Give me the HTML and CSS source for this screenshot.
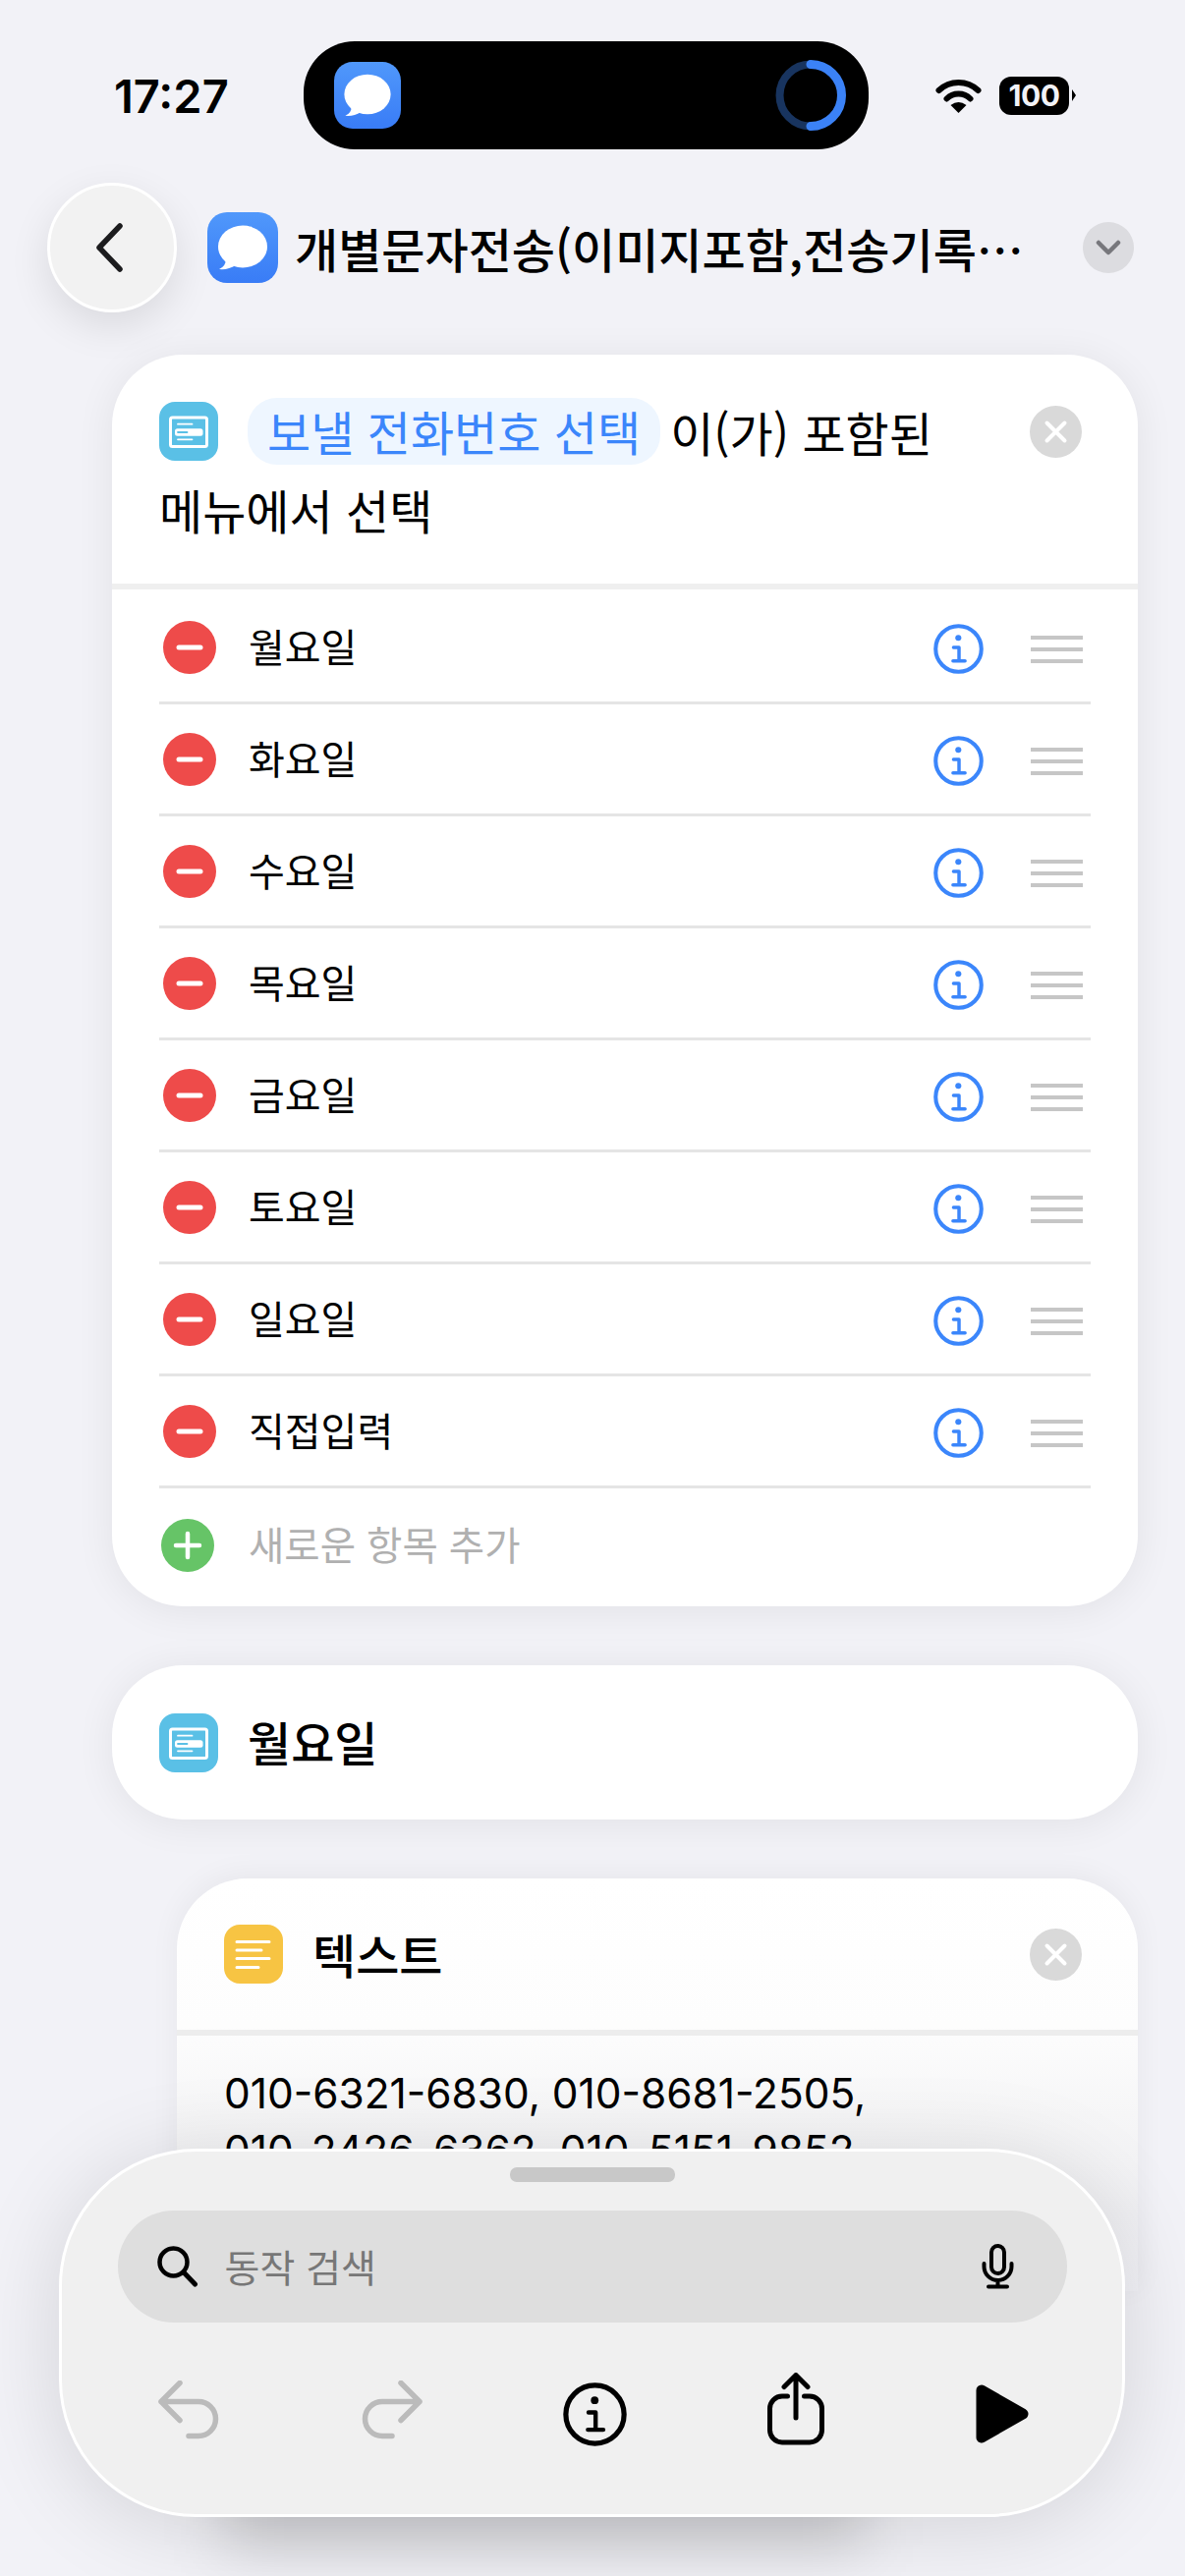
FILE: index.html
```html
<!DOCTYPE html>
<html lang="ko">
<head>
    <meta charset="UTF-8">
    <meta name="viewport" content="width=device-width, initial-scale=1.0">
    <title>개별문자전송</title>
    <link rel="stylesheet" href="styles.css">
</head>
<body>

<!-- shared icons -->
<svg class="defs" width="0" height="0">
    <defs>
        <linearGradient id="msgGrad" x1="0" y1="0" x2="0" y2="1">
            <stop offset="0" stop-color="#5098fb"/>
            <stop offset="1" stop-color="#397cf6"/>
        </linearGradient>
    </defs>
    <symbol id="msg" viewBox="0 0 72 72">
        <rect width="72" height="72" rx="20" fill="url(#msgGrad)"/>
        <ellipse cx="36" cy="35" rx="25" ry="21.5" fill="#fff"/>
        <path d="M19 47 Q19 55 12 58 Q21 59 29 54 Z" fill="#fff"/>
    </symbol>
    <symbol id="data" viewBox="0 0 60 60">
        <rect width="60" height="60" rx="16" fill="#5ac0e6"/>
        <rect x="11.5" y="16" width="37" height="29.5" rx="2" fill="none" stroke="#fff" stroke-width="3"/>
        <path d="M19 22.7 H33.5 M19 38.3 H33.5" stroke="#fff" stroke-width="1.8" stroke-linecap="round"/>
        <rect x="16" y="27.3" width="28.5" height="7.4" rx="2.5" fill="#fff"/>
        <path d="M19 31 H28.5" stroke="#5ac0e6" stroke-width="1.8" stroke-linecap="round"/>
    </symbol>
    <symbol id="note" viewBox="0 0 60 60">
        <rect width="60" height="60" rx="16" fill="#f7c443"/>
        <path d="M13 17.5 H46 M13 26 H38 M13 34.5 H46 M13 43.5 H35" stroke="#fff" stroke-width="3" stroke-linecap="round"/>
    </symbol>
    <symbol id="info" viewBox="0 0 50 50">
        <circle cx="25" cy="25" r="22.8" fill="none" stroke="currentColor" stroke-width="4"/>
        <circle cx="24.8" cy="14" r="3" fill="currentColor"/>
        <path d="M20 23.5 H25.5 V37 M19.5 37 H31.5" fill="none" stroke="currentColor" stroke-width="3.4" stroke-linecap="round" stroke-linejoin="round"/>
    </symbol>
    <symbol id="close" viewBox="0 0 53 53">
        <circle cx="26.5" cy="26.5" r="26.5" fill="#d9d9d9"/>
        <path d="M17.5 17.5 L35.5 35.5 M35.5 17.5 L17.5 35.5" stroke="#fff" stroke-width="4" stroke-linecap="round"/>
    </symbol>
    <symbol id="minus" viewBox="0 0 54 54">
        <circle cx="27" cy="27" r="27" fill="#ee4b4a"/>
        <path d="M16 27 H38" stroke="#fff" stroke-width="5" stroke-linecap="round"/>
    </symbol>
</svg>

<div class="status">
    <div class="time">17:27</div>
    <div class="island">
        <svg class="islandIcon" width="68" height="70"><use href="#msg"/></svg>
        <svg class="ring" width="72" height="72" viewBox="0 0 72 72">
            <circle cx="36" cy="36" r="31.5" fill="none" stroke="#18345f" stroke-width="8"/>
            <path d="M36 4.5 A31.5 31.5 0 0 1 36 67.5" fill="none" stroke="#3b82f6" stroke-width="9" stroke-linecap="round"/>
        </svg>
    </div>
    <svg class="wifi" width="47" height="36" viewBox="0 0 47 36">
        <path d="M3.5 13 A29 29 0 0 1 43.5 13 M11.5 21.5 A17 17 0 0 1 35.5 21.5" fill="none" stroke="#000" stroke-width="6" stroke-linecap="round"/>
        <path d="M15.5 28 Q23.5 22 31.5 28 L23.5 36 Z" fill="#000"/>
    </svg>
    <div class="battery">100</div>
    <div class="batteryNub"></div>
</div>

<div class="topbar">
    <div class="back">
        <svg width="30" height="52" viewBox="0 0 30 52"><path d="M26 4 L5 26 L26 48" fill="none" stroke="#1c1c1e" stroke-width="5.5" stroke-linecap="round" stroke-linejoin="round"/></svg>
    </div>
    <svg class="titleIcon" width="72" height="72"><use href="#msg"/></svg>
    <div class="title">개별문자전송(이미지포함,전송기록…</div>
    <div class="chevron">
        <svg width="26" height="16" viewBox="0 0 26 16"><path d="M3 3 L13 13 L23 3" fill="none" stroke="#77777c" stroke-width="4.5" stroke-linecap="round" stroke-linejoin="round"/></svg>
    </div>
</div>

<div class="content">
    <div class="card menuCard">
        <div class="menuHead">
            <div class="menuLine">
                <svg width="60" height="60"><use href="#data"/></svg>
                <span class="pill">보낼 전화번호 선택</span>
                <span class="menuText">이(가) 포함된</span>
                <svg class="closeBtn" width="53" height="53"><use href="#close"/></svg>
            </div>
            <div class="menuLine2">메뉴에서 선택</div>
        </div>
        <div class="list">
            <div class="row">
                <svg class="minus" width="54" height="54"><use href="#minus"/></svg>
                <span class="rowText">월요일</span>
                <svg class="rowInfo" width="51" height="51"><use href="#info"/></svg>
                <div class="handle"><i></i><i></i><i></i></div>
            </div>
            <div class="row">
                <svg class="minus" width="54" height="54"><use href="#minus"/></svg>
                <span class="rowText">화요일</span>
                <svg class="rowInfo" width="51" height="51"><use href="#info"/></svg>
                <div class="handle"><i></i><i></i><i></i></div>
            </div>
            <div class="row">
                <svg class="minus" width="54" height="54"><use href="#minus"/></svg>
                <span class="rowText">수요일</span>
                <svg class="rowInfo" width="51" height="51"><use href="#info"/></svg>
                <div class="handle"><i></i><i></i><i></i></div>
            </div>
            <div class="row">
                <svg class="minus" width="54" height="54"><use href="#minus"/></svg>
                <span class="rowText">목요일</span>
                <svg class="rowInfo" width="51" height="51"><use href="#info"/></svg>
                <div class="handle"><i></i><i></i><i></i></div>
            </div>
            <div class="row">
                <svg class="minus" width="54" height="54"><use href="#minus"/></svg>
                <span class="rowText">금요일</span>
                <svg class="rowInfo" width="51" height="51"><use href="#info"/></svg>
                <div class="handle"><i></i><i></i><i></i></div>
            </div>
            <div class="row">
                <svg class="minus" width="54" height="54"><use href="#minus"/></svg>
                <span class="rowText">토요일</span>
                <svg class="rowInfo" width="51" height="51"><use href="#info"/></svg>
                <div class="handle"><i></i><i></i><i></i></div>
            </div>
            <div class="row">
                <svg class="minus" width="54" height="54"><use href="#minus"/></svg>
                <span class="rowText">일요일</span>
                <svg class="rowInfo" width="51" height="51"><use href="#info"/></svg>
                <div class="handle"><i></i><i></i><i></i></div>
            </div>
            <div class="row">
                <svg class="minus" width="54" height="54"><use href="#minus"/></svg>
                <span class="rowText">직접입력</span>
                <svg class="rowInfo" width="51" height="51"><use href="#info"/></svg>
                <div class="handle"><i></i><i></i><i></i></div>
            </div>
            <div class="addRow">
                <svg width="54" height="54" viewBox="0 0 54 54">
                    <circle cx="27" cy="27" r="27" fill="#66c467"/>
                    <path d="M27 15 V39 M15 27 H39" stroke="#fff" stroke-width="4.5" stroke-linecap="round"/>
                </svg>
                <span class="addText">새로운 항목 추가</span>
            </div>
        </div>
    </div>

    <div class="card caseCard">
        <svg width="60" height="60"><use href="#data"/></svg>
        <span class="caseText">월요일</span>
    </div>

    <div class="card textCard">
        <div class="textHead">
            <svg width="60" height="60"><use href="#note"/></svg>
            <span class="caseText">텍스트</span>
            <svg class="closeBtn" width="53" height="53"><use href="#close"/></svg>
        </div>
        <div class="numbers">010-6321-6830, 010-8681-2505,<br>010-2426-6362, 010-5151-9852</div>
    </div>
</div>

<!-- floating action sheet -->
<div class="sheet">
    <div class="grabber"></div>
    <div class="search">
        <svg width="42" height="42" viewBox="0 0 42 42">
            <circle cx="16.5" cy="16.5" r="14" fill="none" stroke="#000" stroke-width="4.5"/>
            <path d="M27 27 L38.5 39" stroke="#000" stroke-width="5" stroke-linecap="round"/>
        </svg>
        <span class="searchText">동작 검색</span>
        <svg class="mic" width="33" height="46" viewBox="0 0 33 46">
            <rect x="10" y="2" width="13" height="28" rx="6.5" fill="none" stroke="#000" stroke-width="4"/>
            <path d="M2.5 20 V23 A14 14 0 0 0 30.5 23 V20 M16.5 37 V43 M7 43.5 H26" fill="none" stroke="#000" stroke-width="4" stroke-linecap="round"/>
        </svg>
    </div>
    <div class="tools">
        <svg class="arrow" width="62" height="60" viewBox="0 0 62 60">
            <path d="M22 2.5 L3 21.5 L22 40.5 M3 21.5 H41 A17.5 17.5 0 0 1 41 56.5 H31" fill="none" stroke="#bbb" stroke-width="5.5" stroke-linecap="round" stroke-linejoin="round"/>
        </svg>
        <svg class="arrow" width="62" height="60" viewBox="0 0 62 60">
            <path d="M40 2.5 L59 21.5 L40 40.5 M59 21.5 H21 A17.5 17.5 0 0 0 21 56.5 H31" fill="none" stroke="#bbb" stroke-width="5.5" stroke-linecap="round" stroke-linejoin="round"/>
        </svg>
        <svg class="toolInfo" width="65" height="65"><use href="#info"/></svg>
        <svg class="share" width="58" height="74" viewBox="0 0 58 74">
            <path d="M20.5 24 H15 A12.5 12.5 0 0 0 2.5 36.5 V58.5 A12.5 12.5 0 0 0 15 71 H43 A12.5 12.5 0 0 0 55.5 58.5 V36.5 A12.5 12.5 0 0 0 43 24 H37.5" fill="none" stroke="#000" stroke-width="5" stroke-linecap="round"/>
            <path d="M29 46 V3 M17 14.5 L29 2.5 L41 14.5" fill="none" stroke="#000" stroke-width="5" stroke-linecap="round" stroke-linejoin="round"/>
        </svg>
        <svg width="54" height="60" viewBox="0 0 54 60">
            <polygon points="6,6 48,30 6,54" fill="#000" stroke="#000" stroke-width="11" stroke-linejoin="round"/>
        </svg>
    </div>
</div>

</body>
</html>
```

FILE: styles.css
```css
html, body {
    margin: 0;
    padding: 0;
}

body {
    position: relative;
    width: 1206px;
    height: 2622px;
    overflow: hidden;
    background: #f2f2f7;
    color: #000;
    font-family: "Noto Sans CJK KR", "Noto Sans", sans-serif;
}

svg {
    display: block;
    flex: none;
}

.defs {
    position: absolute;
}

/* status bar */
.status {
    display: flex;
    align-items: center;
    padding: 42px 0 0 116px;
}

.time {
    width: 193px;
    font-family: Inter, sans-serif;
    font-size: 47px;
    font-weight: 600;
}

.island {
    display: flex;
    align-items: center;
    justify-content: space-between;
    box-sizing: border-box;
    width: 575px;
    height: 110px;
    padding: 0 23px 0 31px;
    border-radius: 52px;
    background: #000;
}

.wifi {
    margin-left: 68px;
}

.battery {
    width: 71px;
    height: 39px;
    margin-left: 18px;
    border-radius: 12px;
    background: #000;
    color: #f2f2f7;
    font-family: Inter, sans-serif;
    font-size: 30px;
    font-weight: 700;
    line-height: 39px;
    text-align: center;
    letter-spacing: -0.5px;
}

.batteryNub {
    width: 0;
    height: 0;
    margin-left: 3px;
    border-top: 6px solid transparent;
    border-bottom: 6px solid transparent;
    border-left: 4px solid #000;
}

/* top bar */
.topbar {
    display: flex;
    align-items: center;
    height: 132px;
    margin-top: 34px;
    padding-left: 48px;
}

.back {
    display: flex;
    align-items: center;
    justify-content: center;
    box-sizing: border-box;
    width: 132px;
    height: 132px;
    padding-right: 6px;
    border: 3px solid #fff;
    border-radius: 50%;
    background: #f2f2f2;
    box-shadow: 0 14px 40px rgba(0, 0, 0, 0.1);
}

.titleIcon {
    margin-left: 31px;
}

.title {
    margin-left: 17px;
    font-size: 48px;
    font-weight: 500;
    white-space: nowrap;
}

.chevron {
    display: flex;
    align-items: center;
    justify-content: center;
    width: 52px;
    height: 52px;
    margin-left: auto;
    margin-right: 52px;
    border-radius: 50%;
    background: #dcdce0;
}

/* cards */
.content {
    margin-top: 43px;
    padding: 0 48px 0 114px;
}

.card {
    border-radius: 72px;
    background: #fff;
    box-shadow: 0 4px 40px rgba(0, 0, 0, 0.07);
}

.menuHead {
    box-sizing: border-box;
    height: 233px;
    padding: 44px 57px 0 48px;
}

.menuLine {
    display: flex;
    align-items: center;
    height: 68px;
}

.pill {
    height: 68px;
    margin-left: 30px;
    padding: 0 20px;
    border-radius: 30px;
    background: #eef6ff;
    color: #3b86fb;
    font-size: 48px;
    line-height: 66px;
    white-space: nowrap;
}

.menuText {
    margin-left: 10px;
    font-size: 48px;
    white-space: nowrap;
}

.closeBtn {
    margin-left: auto;
}

.menuLine2 {
    margin-top: 15px;
    font-size: 48px;
    line-height: 60px;
}

.list {
    padding: 3px 48px 0;
    border-top: 6px solid #efefef;
}

.row {
    display: flex;
    align-items: center;
    box-sizing: border-box;
    height: 114px;
    border-bottom: 3px solid #e5e5e5;
}

.minus {
    margin-left: 4px;
}

.rowText {
    margin-left: 33px;
    margin-bottom: 3px;
    font-size: 40px;
}

.rowInfo {
    margin-left: auto;
    margin-top: 3px;
    color: #3b86fb;
}

.handle {
    display: flex;
    flex-direction: column;
    gap: 8px;
    width: 53px;
    margin: 4px 8px 0 48px;
}

.handle i {
    display: block;
    height: 4px;
    background: #c6c6c6;
}

.addRow {
    display: flex;
    align-items: flex-start;
    box-sizing: border-box;
    height: 120px;
    padding: 31px 0 0 2px;
}

.addText {
    margin-left: 35px;
    color: #b0b0b0;
    font-size: 39.5px;
    line-height: 50px;
}

.caseCard {
    display: flex;
    align-items: center;
    height: 157px;
    margin-top: 60px;
    padding-left: 48px;
}

.caseText {
    margin-left: 30px;
    margin-bottom: 3px;
    font-size: 48px;
    font-weight: 500;
}

/* fades out under the sheet */
.textCard {
    height: 420px;
    margin-top: 60px;
    margin-left: 66px;
    border-radius: 72px 72px 0 0;
    background: linear-gradient(#fff 0, #fdfdfd 150px, #f6f6f7 240px, #f0f0f3 340px, #f2f2f7 420px);
    box-shadow: 0 -4px 30px rgba(0, 0, 0, 0.05);
}

.textHead {
    display: flex;
    align-items: center;
    box-sizing: border-box;
    height: 160px;
    padding: 0 57px 0 48px;
    border-bottom: 6px solid #ededed;
}

.numbers {
    padding: 30px 0 0 48px;
    font-family: Inter, sans-serif;
    font-size: 42.4px;
    line-height: 58px;
    white-space: nowrap;
}

/* floating sheet */
.sheet {
    position: absolute;
    left: 60px;
    top: 2187px;
    display: flex;
    flex-direction: column;
    align-items: center;
    box-sizing: border-box;
    width: 1085px;
    height: 375px;
    padding-top: 16px;
    border: 3px solid #fff;
    border-radius: 140px;
    background: #f0f0f0;
    box-shadow: 0 10px 90px rgba(0, 0, 0, 0.13);
}

.sheet::after {
    content: "";
    position: absolute;
    left: 165px;
    top: 290px;
    z-index: -1;
    width: 650px;
    height: 110px;
    background: rgba(0, 0, 0, 0.16);
    filter: blur(30px);
}

.grabber {
    width: 168px;
    height: 15px;
    border-radius: 7px;
    background: #c8c8c8;
}

.search {
    display: flex;
    align-items: center;
    box-sizing: border-box;
    width: 966px;
    height: 114px;
    margin-top: 29px;
    padding: 0 54px 0 40px;
    border-radius: 57px;
    background: #dedede;
}

.searchText {
    margin-left: 27px;
    margin-bottom: 2px;
    color: #777;
    font-size: 39px;
}

.mic {
    margin-left: auto;
}

.tools {
    display: grid;
    grid-template-columns: repeat(5, 207px);
    grid-template-rows: 66px;
    align-items: center;
    justify-items: center;
    margin-top: 60px;
    padding-left: 6px;
}

.arrow {
    margin-bottom: 8px;
}

.share {
    margin: 0 6px 11px 0;
}

.toolInfo {
    color: #000;
}
```
